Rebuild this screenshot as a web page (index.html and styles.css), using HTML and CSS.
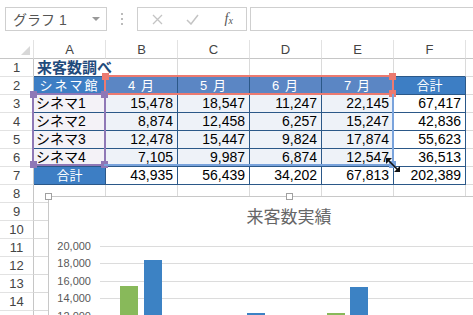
FILE: index.html
```html
<!DOCTYPE html>
<html lang="ja">
<head>
  <meta charset="UTF-8">
  <meta name="viewport" content="width=device-width, initial-scale=1.0">
  <title>来客数調べ</title>
  <link rel="stylesheet" href="styles.css">
</head>
<body>
  <div class="formula-bar">
    <div class="name-box"><span>グラフ 1</span><span class="drop"></span></div>
    <div class="dots">
      <svg width="3" height="12" viewBox="0 0 3 12"><rect x="0" y="0" width="2" height="2" fill="#bbb"/><rect x="0" y="5" width="2" height="2" fill="#bbb"/><rect x="0" y="10" width="2" height="2" fill="#bbb"/></svg>
    </div>
    <div class="fx-buttons">
      <span class="btn"><svg width="11" height="11" viewBox="0 0 11 11"><path d="M1 1L10 10M10 1L1 10" stroke="#c4c4c4" stroke-width="1.3" fill="none"/></svg></span>
      <span class="btn"><svg width="13" height="11" viewBox="0 0 13 11"><path d="M1 6L5 10L12 1" stroke="#c4c4c4" stroke-width="1.5" fill="none"/></svg></span>
      <span class="btn fx"><i>f</i><i class="sub">x</i></span>
    </div>
    <div class="formula-input"></div>
  </div>

  <div class="sheet">
    <div class="row col-head">
      <div class="cell corner"><span class="tri"></span></div>
      <div class="cell">A</div>
      <div class="cell">B</div>
      <div class="cell">C</div>
      <div class="cell">D</div>
      <div class="cell">E</div>
      <div class="cell">F</div>
      <div class="cell"></div>
    </div>

    <div class="row">
      <div class="cell rn">1</div>
      <div class="cell title tb">来客数調べ</div>
      <div class="cell tb"></div>
      <div class="cell tb"></div>
      <div class="cell tb"></div>
      <div class="cell tb"></div>
      <div class="cell tb"></div>
      <div class="cell"></div>
    </div>

    <div class="row">
      <div class="cell rn">2</div>
      <div class="cell t hd spaced">シネマ館</div>
      <div class="cell t hd hd-sel month">4 月</div>
      <div class="cell t hd hd-sel month">5 月</div>
      <div class="cell t hd hd-sel month">6 月</div>
      <div class="cell t hd hd-sel month">7 月</div>
      <div class="cell t hd">合計</div>
      <div class="cell"></div>
    </div>

    <div class="row">
      <div class="cell rn">3</div>
      <div class="cell t lab">シネマ1</div>
      <div class="cell t val n">15,478</div>
      <div class="cell t val n">18,547</div>
      <div class="cell t val n">11,247</div>
      <div class="cell t val n">22,145</div>
      <div class="cell t n">67,417</div>
      <div class="cell"></div>
    </div>

    <div class="row">
      <div class="cell rn">4</div>
      <div class="cell t lab">シネマ2</div>
      <div class="cell t val n">8,874</div>
      <div class="cell t val n">12,458</div>
      <div class="cell t val n">6,257</div>
      <div class="cell t val n">15,247</div>
      <div class="cell t n">42,836</div>
      <div class="cell"></div>
    </div>

    <div class="row">
      <div class="cell rn">5</div>
      <div class="cell t lab">シネマ3</div>
      <div class="cell t val n">12,478</div>
      <div class="cell t val n">15,447</div>
      <div class="cell t val n">9,824</div>
      <div class="cell t val n">17,874</div>
      <div class="cell t n">55,623</div>
      <div class="cell"></div>
    </div>

    <div class="row">
      <div class="cell rn">6</div>
      <div class="cell t lab">シネマ4</div>
      <div class="cell t val n">7,105</div>
      <div class="cell t val n">9,987</div>
      <div class="cell t val n">6,874</div>
      <div class="cell t val n">12,547</div>
      <div class="cell t n">36,513</div>
      <div class="cell"></div>
    </div>

    <div class="row">
      <div class="cell rn">7</div>
      <div class="cell t hd">合計</div>
      <div class="cell t n">43,935</div>
      <div class="cell t n">56,439</div>
      <div class="cell t n">34,202</div>
      <div class="cell t n">67,813</div>
      <div class="cell t n">202,389</div>
      <div class="cell"></div>
    </div>

    <div class="row"><div class="cell rn">8</div><div class="cell"></div><div class="cell"></div><div class="cell"></div><div class="cell"></div><div class="cell"></div><div class="cell"></div><div class="cell"></div></div>
    <div class="row"><div class="cell rn">9</div><div class="cell"></div><div class="cell"></div><div class="cell"></div><div class="cell"></div><div class="cell"></div><div class="cell"></div><div class="cell"></div></div>
    <div class="row"><div class="cell rn">10</div><div class="cell"></div><div class="cell"></div><div class="cell"></div><div class="cell"></div><div class="cell"></div><div class="cell"></div><div class="cell"></div></div>
    <div class="row"><div class="cell rn">11</div><div class="cell"></div><div class="cell"></div><div class="cell"></div><div class="cell"></div><div class="cell"></div><div class="cell"></div><div class="cell"></div></div>
    <div class="row"><div class="cell rn">12</div><div class="cell"></div><div class="cell"></div><div class="cell"></div><div class="cell"></div><div class="cell"></div><div class="cell"></div><div class="cell"></div></div>
    <div class="row"><div class="cell rn">13</div><div class="cell"></div><div class="cell"></div><div class="cell"></div><div class="cell"></div><div class="cell"></div><div class="cell"></div><div class="cell"></div></div>
    <div class="row"><div class="cell rn">14</div><div class="cell"></div><div class="cell"></div><div class="cell"></div><div class="cell"></div><div class="cell"></div><div class="cell"></div><div class="cell"></div></div>
    <div class="row"><div class="cell rn"></div><div class="cell"></div><div class="cell"></div><div class="cell"></div><div class="cell"></div><div class="cell"></div><div class="cell"></div><div class="cell"></div></div>

    <!-- chart data range highlights -->
    <div class="range range-red">
      <span class="hnd hnd-tl"></span><span class="hnd hnd-tr"></span><span class="hnd hnd-br"></span>
    </div>
    <div class="range range-purple">
      <span class="hnd hnd-tl"></span><span class="hnd hnd-tr"></span><span class="hnd hnd-bl"></span><span class="hnd hnd-br"></span>
    </div>
    <div class="range range-blue">
      <span class="hnd hnd-br"></span>
      <svg class="resize" width="16" height="16" viewBox="0 0 16 16">
        <path d="M3 3L13 13" stroke="#111" stroke-width="1.6"/>
        <path d="M1 1H7L1 7Z" fill="#111"/>
        <path d="M15 15H9L15 9Z" fill="#111"/>
      </svg>
    </div>

    <div class="chart">
      <span class="c-hnd c-hnd-l"></span>
      <span class="c-hnd c-hnd-m"></span>
      <div class="chart-title">来客数実績</div>
      <div class="plot">
        <div class="tick"><span class="lbl">20,000</span><span class="gl"></span></div>
        <div class="tick"><span class="lbl">18,000</span><span class="gl"></span></div>
        <div class="tick"><span class="lbl">16,000</span><span class="gl"></span></div>
        <div class="tick"><span class="lbl">14,000</span><span class="gl"></span></div>
        <div class="tick"><span class="lbl">12,000</span><span class="gl"></span></div>
        <div class="bars">
          <div class="bar green" style="left:20px; top:40px"></div>
          <div class="bar blue" style="left:44px; top:14px"></div>
          <div class="bar green" style="left:123px; top:97px"></div>
          <div class="bar blue" style="left:147px; top:67px"></div>
          <div class="bar green" style="left:227px; top:67px"></div>
          <div class="bar blue" style="left:250px; top:41px"></div>
          <div class="bar green" style="left:330px; top:112px"></div>
          <div class="bar blue" style="left:354px; top:87px"></div>
        </div>
      </div>
    </div>
  </div>
</body>
</html>
```

FILE: styles.css
```css
* {
  box-sizing: border-box;
}
body {
  margin: 0;
  width: 473px;
  height: 315px;
  overflow: hidden;
  background-color: #fff;
  font-family: "Liberation Sans", "Noto Sans CJK JP", sans-serif;
}

/* formula bar */
.formula-bar {
  display: flex;
  align-items: center;
  height: 40px;
  padding: 7px 0 9px 5px;
}
.name-box {
  width: 102px;
  height: 24px;
  border: 1px solid #cfcfcf;
  display: flex;
  align-items: center;
  justify-content: space-between;
  padding: 0 6px 0 7px;
  font-size: 14px;
  color: #555;
}
.drop {
  width: 0;
  height: 0;
  border-left: 4px solid transparent;
  border-right: 4px solid transparent;
  border-top: 4px solid #999;
}
.dots {
  width: 30px;
  display: flex;
  justify-content: center;
}
.fx-buttons {
  width: 110px;
  height: 24px;
  border: 1px solid #cfcfcf;
  display: flex;
  align-items: center;
  padding-left: 2px;
}
.btn {
  width: 35px;
  display: flex;
  justify-content: center;
}
.fx {
  font-family: "Liberation Serif", serif;
  font-size: 14px;
  color: #555;
  margin-left: 2px;
}
.fx .sub {
  font-size: 10px;
  margin-top: 4px;
}
.formula-input {
  margin-left: 3px;
  flex: 1;
  height: 24px;
  border: 1px solid #cfcfcf;
  border-right: none;
}

/* sheet grid */
.sheet {
  position: relative;
}
.row {
  display: grid;
  grid-template-columns: 34px repeat(6, 72px) 40px;
  height: 18px;
}
.cell {
  height: 100%;
  border-right: 1px solid #dadada;
  border-bottom: 1px solid #dadada;
  padding: 0 3px;
  font-size: 14px;
  line-height: 17px;
  white-space: nowrap;
  overflow: hidden;
  color: #000;
}
.col-head {
  height: 19px;
}
.col-head .cell {
  text-align: center;
  font-size: 13px;
  line-height: 19px;
  color: #444;
  border-bottom-color: #c6c6c6;
  border-right-color: #e2e2e2;
}
.corner {
  position: relative;
}
.tri {
  position: absolute;
  right: 3px;
  bottom: 3px;
  width: 0;
  height: 0;
  border-left: 9px solid transparent;
  border-bottom: 9px solid #d8d8d8;
}
.rn {
  text-align: center;
  font-size: 13px;
  color: #444;
  border-right-color: #c6c6c6;
  border-bottom-color: #e2e2e2;
}
.title {
  overflow: visible;
  font-weight: bold;
  font-size: 15px;
  color: #1f4b7c;
  border-right-color: transparent;
  padding-left: 3px;
}
.tb {
  border-bottom-color: #2b5888;
}
.t {
  border-right-color: #2b5888;
  border-bottom-color: #2b5888;
}
.hd {
  background-color: #3d7ec4;
  color: #fff;
  text-align: center;
  font-size: 13px;
}
.hd-sel {
  background-color: #5b86c4;
}
.spaced {
  letter-spacing: 2px;
}
.month {
  letter-spacing: 1px;
}
.lab {
  background-color: #f4f2f7;
  padding-left: 2px;
}
.val {
  background-color: #eef2f8;
}
.n {
  text-align: right;
  padding-right: 4px;
}

/* chart data range highlights */
.range {
  position: absolute;
  border: 2px solid;
}
.range-red {
  left: 104px;
  top: 35px;
  width: 290px;
  height: 20px;
  border-color: #ec7a70;
}
.range-purple {
  left: 32px;
  top: 53px;
  width: 74px;
  height: 73px;
  border-color: #8f78b6;
}
.range-blue {
  left: 104px;
  top: 54px;
  width: 290px;
  height: 72px;
  border-color: #79a3dc;
  border-left: none;
  border-top: none;
}
.hnd {
  position: absolute;
  width: 7px;
  height: 7px;
}
.range-red .hnd { background-color: #ec7a70; }
.range-purple .hnd { background-color: #8f78b6; }
.range-blue .hnd { background-color: #79a3dc; }
.hnd-tl { left: -4px; top: -4px; }
.hnd-tr { right: -4px; top: -4px; }
.hnd-bl { left: -4px; bottom: -4px; }
.hnd-br { right: -4px; bottom: -4px; }
.resize {
  position: absolute;
  right: -9px;
  bottom: -9px;
}

/* chart */
.chart {
  position: absolute;
  left: 48px;
  top: 156px;
  width: 482px;
  height: 220px;
  background-color: #fff;
  border: 1px solid #c8c8c8;
}
.c-hnd {
  position: absolute;
  top: -4px;
  width: 7px;
  height: 7px;
  background-color: #fff;
  border: 1px solid #a0a0a0;
}
.c-hnd-l { left: -4px; }
.c-hnd-m { left: 237px; }
.chart-title {
  margin-top: 11px;
  text-align: center;
  font-size: 17px;
  line-height: 20px;
  color: #666;
}
.plot {
  position: relative;
  margin-top: 18px;
}
.tick {
  display: flex;
  height: 17.4px;
}
.lbl {
  width: 42px;
  margin-top: -7px;
  line-height: 14px;
  height: 14px;
  text-align: right;
  font-size: 11px;
  color: #595959;
}
.gl {
  flex: 1;
  margin-left: 9px;
  border-top: 1px solid #dcdcdc;
}
.bars {
  position: absolute;
  left: 51px;
  top: 0;
  right: 0;
  height: 200px;
}
.bar {
  position: absolute;
  width: 18px;
  height: 200px;
}
.green {
  background-color: #88b95a;
}
.blue {
  background-color: #3c82c4;
}
```
